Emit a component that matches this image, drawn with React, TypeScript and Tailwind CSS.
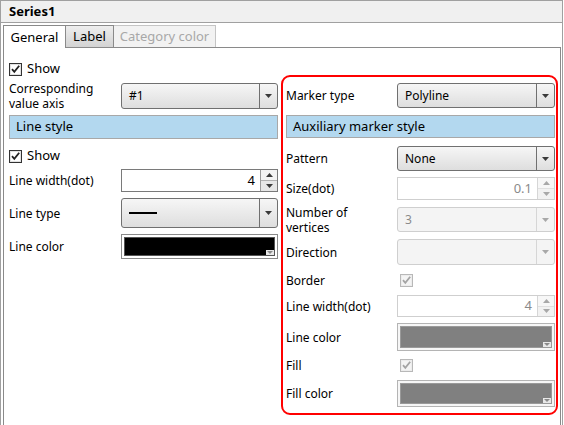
import React from 'react';

const Arrow = ({ disabled }: { disabled?: boolean }) => (
  <svg width="7" height="4" viewBox="0 0 7 4">
    <path d="M0 0 H7 L3.5 4 Z" fill={disabled ? '#a8a8a8' : '#3a3a3a'} />
  </svg>
);

const SmallArrow = ({ up, disabled }: { up?: boolean; disabled?: boolean }) => (
  <svg width="7" height="4" viewBox="0 0 7 4">
    <path d={up ? 'M0 4 H7 L3.5 0 Z' : 'M0 0 H7 L3.5 4 Z'} fill={disabled ? '#a8a8a8' : '#3a3a3a'} />
  </svg>
);

const CheckBox = ({ disabled }: { disabled?: boolean }) => (
  <svg width="13" height="13" viewBox="0 0 13 13" className="shrink-0">
    <rect x="0.5" y="0.5" width="12" height="12" fill={disabled ? '#f4f4f4' : '#ffffff'} stroke={disabled ? '#b8b8b8' : '#333333'} />
    <rect x="1.5" y="1.5" width="10" height="10" fill="none" stroke={disabled ? '#ececec' : '#e2e2e2'} />
    <path d="M3 6.2 L5.3 8.8 L10.2 2.8" fill="none" stroke={disabled ? '#a4a4a4' : '#222222'} strokeWidth="1.8" />
  </svg>
);

const Select = ({ value, disabled, h, children }: { value?: string; disabled?: boolean; h: string; children?: React.ReactNode }) => (
  <div
    className={`flex w-full rounded-[3px] border ${h} ${
      disabled ? 'border-[#cfcfcf] bg-[#f4f4f4] text-[#8a8a8a]' : 'border-[#707070] bg-gradient-to-b from-[#f6f6f6] to-[#dedede]'
    }`}
  >
    <div className="flex flex-1 items-center pl-[7px]">{children ?? value}</div>
    <div className={`flex w-[18px] items-center justify-center border-l ${disabled ? 'border-[#d6d6d6]' : 'border-[#707070]'}`}>
      <Arrow disabled={disabled} />
    </div>
  </div>
);

const Spin = ({ value, disabled, h }: { value: string; disabled?: boolean; h: string }) => (
  <div className={`flex w-full border ${h} ${disabled ? 'border-[#cfcfcf] text-[#8a8a8a]' : 'border-[#7a7a7a]'} bg-white`}>
    <div className="flex flex-1 items-center justify-end pr-[5px] text-[13px]">{value}</div>
    <div className={`flex w-[17px] flex-col border-l ${disabled ? 'border-[#d6d6d6]' : 'border-[#9a9a9a]'}`}>
      <div className={`flex flex-1 items-center justify-center border-b ${disabled ? 'border-[#e0e0e0] bg-[#f7f7f7]' : 'border-[#b0b0b0] bg-[#f3f3f3]'}`}>
        <SmallArrow up disabled={disabled} />
      </div>
      <div className={`flex flex-1 items-center justify-center ${disabled ? 'bg-[#f2f2f2]' : 'bg-[#e6e6e6]'}`}>
        <SmallArrow disabled={disabled} />
      </div>
    </div>
  </div>
);

const ColorBox = ({ color, disabled, h }: { color: string; disabled?: boolean; h: string }) => (
  <div className={`relative w-full border p-[2px] ${h} ${disabled ? 'border-[#b4b4b4] bg-[#f6f6f6]' : 'border-[#8a8a8a] bg-white'}`}>
    <div className={`h-full w-full border ${disabled ? 'border-[#9a9a9a]' : 'border-[#555]'}`} style={{ background: color }} />
    {/* little dropdown mark in the corner */}
    <div className="absolute bottom-[3px] right-[3px] flex h-[5px] w-[8px] items-center justify-center bg-[#e8e8e8]">
      <svg width="6" height="3" viewBox="0 0 6 3">
        <path d="M0 0 H6 L3 3 Z" fill="#8a8a8a" />
      </svg>
    </div>
  </div>
);

const Header = ({ text, h }: { text: string; h: string }) => (
  <div className={`flex items-center border border-[#a8a8a8] bg-[#b3d8ef] pl-[6px] text-[13px] ${h}`}>{text}</div>
);

const Row = ({ label, lw, className, children }: { label: React.ReactNode; lw: string; className: string; children: React.ReactNode }) => (
  <div className={`flex items-center ${className}`}>
    <div className={`${lw} shrink-0 leading-[15px]`}>{label}</div>
    <div className="flex flex-1 items-center">{children}</div>
  </div>
);

export default function App() {
  return (
    <div className="h-[425px] w-[564px] overflow-hidden bg-white font-['Noto_Sans',sans-serif] text-[12px] text-black">
      <div className="flex h-[425px] w-[563px] flex-col border-x border-t border-[#a0a0a0]">
        {/* title */}
        <div className="flex h-[22px] shrink-0 items-center border-b border-[#a0a0a0] bg-[#f0f0f0] pl-[8px] text-[13px] font-bold">
          Series1
        </div>

        {/* tabs */}
        <div className="ml-[2px] mr-[1px] mt-[2px] flex h-[22px] items-end">
          <div className="relative z-10 -mb-px flex h-[23px] w-[63px] items-center justify-center border-x border-t border-[#8a8a8a] bg-white pt-[2px] text-[13px]">
            General
          </div>
          <div className="flex h-[22px] w-[48px] items-center justify-center border-r border-t border-[#8a8a8a] bg-gradient-to-b from-[#eeeeee] to-[#d3d3d3] text-[13px]">
            Label
          </div>
          <div className="flex h-[22px] w-[102px] items-center justify-center border-r border-t border-[#c4c4c4] bg-[#f2f2f2] text-[13px] text-[#a8a8a8]">
            Category color
          </div>
        </div>

        {/* panel */}
        <div className="ml-[2px] mr-[1px] flex flex-1 border-x border-t border-[#8a8a8a]">
          {/* left column */}
          <div className="ml-[5px] flex w-[270px] flex-col pr-px">
            <div className="mt-[13px] flex h-[16px] items-center gap-[5px] text-[13px]">
              <CheckBox />
              Show
            </div>
            <Row lw="w-[112px]" className="mt-[6px] h-[26px]" label={<>Corresponding<br />value axis</>}>
              <Select h="h-[26px]" value="#1" />
            </Row>
            <div className="mt-[6px]">
              <Header h="h-[24px]" text="Line style" />
            </div>
            <div className="mt-[9px] flex h-[16px] items-center gap-[5px] text-[13px]">
              <CheckBox />
              Show
            </div>
            <Row lw="w-[112px]" className="mt-[5px] h-[23px]" label="Line width(dot)">
              <Spin h="h-[23px]" value="4" />
            </Row>
            <Row lw="w-[112px]" className="mt-[6px] h-[30px]" label="Line type">
              <Select h="h-[30px]">
                <div className="h-[2px] w-[28px] bg-black" />
              </Select>
            </Row>
            <Row lw="w-[112px]" className="mt-[6px] h-[25px]" label="Line color">
              <ColorBox h="h-[25px]" color="#000000" />
            </Row>
          </div>

          {/* right column */}
          <div className="ml-[2px] mt-[27px] flex h-[340px] w-[277px] flex-col rounded-[9px] border-2 border-[#ff0000] pl-[3px] pr-px">
            <Row lw="w-[111px]" className="mt-[6px] h-[25px]" label="Marker type">
              <Select h="h-[25px]" value="Polyline" />
            </Row>
            <div className="mt-[7px]">
              <Header h="h-[23px]" text="Auxiliary marker style" />
            </div>
            <Row lw="w-[111px]" className="mt-[8px] h-[25px]" label="Pattern">
              <Select h="h-[25px]" value="None" />
            </Row>
            <Row lw="w-[111px]" className="mt-[6px] h-[23px]" label="Size(dot)">
              <Spin h="h-[23px]" value="0.1" disabled />
            </Row>
            <Row lw="w-[111px]" className="mt-[7px] h-[25px]" label={<>Number of<br />vertices</>}>
              <Select h="h-[25px]" value="3" disabled />
            </Row>
            <Row lw="w-[111px]" className="mt-[7px] h-[26px]" label="Direction">
              <Select h="h-[26px]" value="" disabled />
            </Row>
            <Row lw="w-[111px]" className="mt-[8px] h-[15px]" label="Border">
              <div className="pl-[3px]">
                <CheckBox disabled />
              </div>
            </Row>
            <Row lw="w-[111px]" className="mt-[7px] h-[22px]" label="Line width(dot)">
              <Spin h="h-[22px]" value="4" disabled />
            </Row>
            <Row lw="w-[111px]" className="mt-[6px] h-[28px]" label="Line color">
              <ColorBox h="h-[28px]" color="#808080" disabled />
            </Row>
            <Row lw="w-[111px]" className="mt-[7px] h-[15px]" label="Fill">
              <div className="pl-[3px]">
                <CheckBox disabled />
              </div>
            </Row>
            <Row lw="w-[111px]" className="mt-[7px] h-[27px]" label="Fill color">
              <ColorBox h="h-[27px]" color="#808080" disabled />
            </Row>
          </div>
        </div>
      </div>
    </div>
  );
}
